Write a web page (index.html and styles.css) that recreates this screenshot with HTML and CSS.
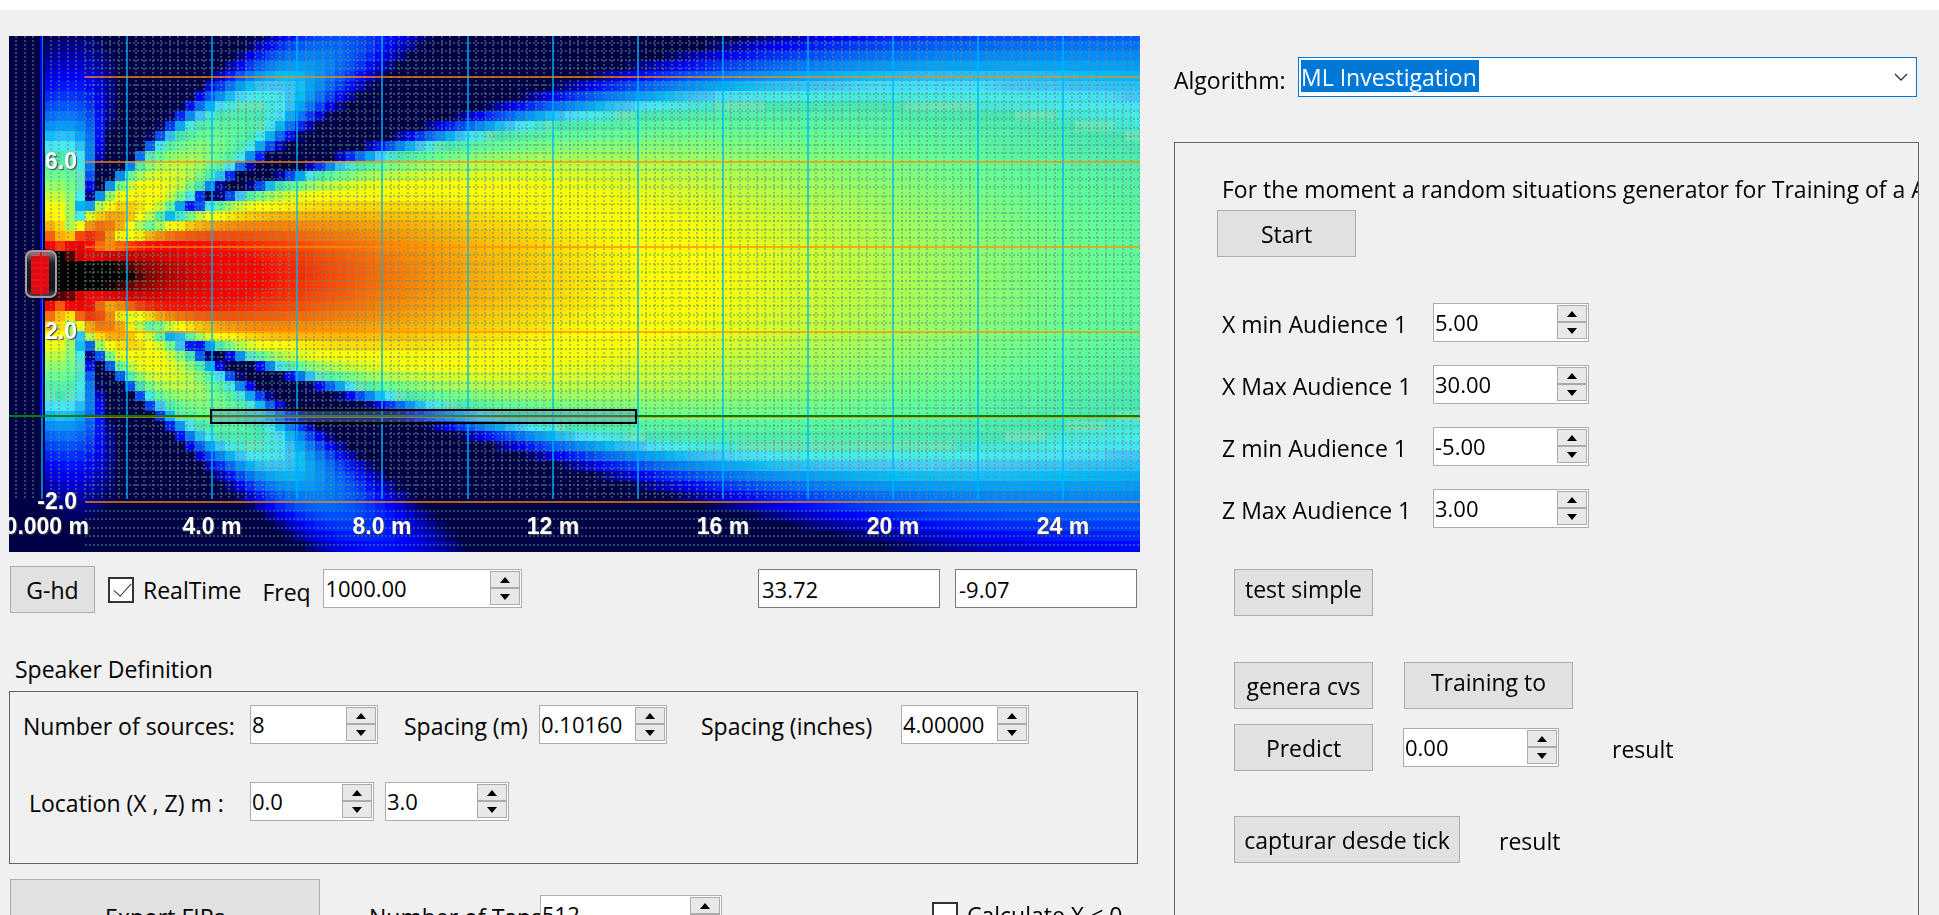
FILE: index.html
```html
<!DOCTYPE html>
<html lang="en">
<head>
  <meta charset="utf-8">
  <title>Speaker array</title>
  <link rel="stylesheet" href="styles.css">
</head>
<body>
  <main class="window">
    <section class="left">
      <div class="plot">
        <canvas id="field" width="1131" height="516"></canvas>
        <svg id="overlay" class="overlay" viewBox="0 0 1131 516">
          <defs>
            <linearGradient id="case" x1="0" y1="0" x2="0" y2="1">
              <stop offset="0" stop-color="#8a8a90"/>
              <stop offset="0.25" stop-color="#202028"/>
              <stop offset="0.8" stop-color="#141420"/>
              <stop offset="1" stop-color="#4a4a50"/>
            </linearGradient>
          </defs>
          <g id="grid" shape-rendering="crispEdges"></g>
          <g id="speaker">
            <rect x="15" y="213" width="34" height="50" rx="8" fill="#000" opacity="0.4"/>
            <rect x="17" y="215" width="30" height="46" rx="6" fill="url(#case)" stroke="#a0a0a4" stroke-width="2"/>
            <rect x="22" y="220" width="18" height="38" fill="#d01018"/>
            <rect x="22" y="216" width="18" height="4" fill="#a06068"/>
            <path d="M22 227h18M22 232h18M22 238h18M22 244h18M22 250h18M32 216v44" stroke="#ff0a14" stroke-width="2"/>
          </g>
          <g id="labels" class="labels"></g>
        </svg>
      </div>

      <div class="toolbar">
        <button class="btn small">G-hd</button>
        <label class="check"><input type="checkbox" checked><span>RealTime</span></label>
        <label for="freq">Freq</label>
        <div class="spin w200"><input id="freq" type="text" value="1000.00"><span class="arrows"><button class="up" aria-label="up"></button><button class="down" aria-label="down"></button></span></div>
        <input class="box first" type="text" value="33.72" aria-label="X">
        <input class="box" type="text" value="-9.07" aria-label="Z">
      </div>

      <h2>Speaker Definition</h2>
      <div class="group">
        <div class="row">
          <label class="l1" for="sources">Number of sources:</label>
          <div class="spin w128"><input id="sources" type="text" value="8"><span class="arrows"><button class="up" aria-label="up"></button><button class="down" aria-label="down"></button></span></div>
          <label class="l2" for="spm">Spacing (m)</label>
          <div class="spin w128"><input id="spm" type="text" value="0.10160"><span class="arrows"><button class="up" aria-label="up"></button><button class="down" aria-label="down"></button></span></div>
          <label class="l3" for="spi">Spacing (inches)</label>
          <div class="spin w128"><input id="spi" type="text" value="4.00000"><span class="arrows"><button class="up" aria-label="up"></button><button class="down" aria-label="down"></button></span></div>
        </div>
        <div class="row">
          <label class="l1 loc" for="locx">Location (X , Z) m :</label>
          <div class="spin w124"><input id="locx" type="text" value="0.0"><span class="arrows"><button class="up" aria-label="up"></button><button class="down" aria-label="down"></button></span></div>
          <div class="spin w124 next"><input id="locz" type="text" value="3.0" aria-label="Z"><span class="arrows"><button class="up" aria-label="up"></button><button class="down" aria-label="down"></button></span></div>
        </div>
      </div>

      <div class="export">
        <button class="btn big">Export FIRs</button>
        <label class="taps" for="taps">Number of Taps</label>
        <div class="spin w182"><input id="taps" type="text" value="512"><span class="arrows"><button class="up" aria-label="up"></button><button class="down" aria-label="down"></button></span></div>
        <label class="check calc"><input type="checkbox"><span>Calculate X &lt; 0</span></label>
      </div>
    </section>

    <section class="right">
      <div class="algorithm">
        <label for="algo">Algorithm:</label>
        <div class="combo">
          <select id="algo"><option>ML Investigation</option></select>
          <svg width="14" height="9" viewBox="0 0 14 9"><path d="M1 1l6 6 6-6" fill="none" stroke="#333" stroke-width="1.4"/></svg>
        </div>
      </div>

      <div class="panel">
        <p>For the moment a random situations generator for Training of a AI</p>
        <button class="btn start">Start</button>

        <div class="limits">
          <label for="xmin">X min Audience 1</label>
          <div class="spin"><input id="xmin" type="text" value="5.00"><span class="arrows"><button class="up" aria-label="up"></button><button class="down" aria-label="down"></button></span></div>
          <label for="xmax">X Max Audience 1</label>
          <div class="spin"><input id="xmax" type="text" value="30.00"><span class="arrows"><button class="up" aria-label="up"></button><button class="down" aria-label="down"></button></span></div>
          <label for="zmin">Z min Audience 1</label>
          <div class="spin"><input id="zmin" type="text" value="-5.00"><span class="arrows"><button class="up" aria-label="up"></button><button class="down" aria-label="down"></button></span></div>
          <label for="zmax">Z Max Audience 1</label>
          <div class="spin"><input id="zmax" type="text" value="3.00"><span class="arrows"><button class="up" aria-label="up"></button><button class="down" aria-label="down"></button></span></div>
        </div>

        <div class="actions">
          <div class="line test"><button class="btn high">test simple</button></div>
          <div class="line"><button class="btn">genera cvs</button><button class="btn high wide">Training to</button></div>
          <div class="line predict">
            <button class="btn">Predict</button>
            <div class="spin"><input type="text" value="0.00" aria-label="Prediction"><span class="arrows"><button class="up" aria-label="up"></button><button class="down" aria-label="down"></button></span></div>
            <output>result</output>
          </div>
          <div class="line capture"><button class="btn xwide">capturar desde tick</button><output>result</output></div>
        </div>
      </div>
    </section>
  </main>
  <script src="plot.js"></script>
</body>
</html>
```
FILE: styles.css
```css
* {
  box-sizing: border-box;
}

body {
  margin: 0;
  height: 100vh;
  overflow: hidden;
  background: #f0f0f0;
  border-top: 10px solid #fff;
  font: 23px/32px "Open Sans", "Noto Sans", sans-serif;
  color: #000;
}

button, input, select {
  font: inherit;
  color: inherit;
  border-radius: 0;
  margin: 0;
}

.window {
  display: grid;
  grid-template-columns: 1131fr 745fr;
  gap: 34px;
  padding: 0 20px 0 9px;
}

.left {
  padding-top: 26px;
  min-width: 0;
}

/* sound field */
.plot {
  display: grid;
  overflow: hidden;
}

.plot canvas, .overlay {
  grid-area: 1 / 1;
  display: block;
  width: 100%;
}

.labels {
  font: bold 23px "Liberation Sans", Arial, sans-serif;
  fill: #fff;
  text-shadow: 1px 1px 1px #444;
}

/* controls */
.btn {
  width: 139px;
  height: 47px;
  padding: 0;
  background: #e1e1e1;
  border: 1px solid #adadad;
  white-space: nowrap;
}

.btn.small { width: 85px; }
.btn.wide { width: 169px; }
.btn.xwide { width: 226px; }
.btn.high { padding: 0 0 8px; }
.btn.big { width: 310px; height: 76px; }

.spin {
  display: flex;
  width: 156px;
  height: 39px;
  padding: 1px;
  background: #fff;
  border: 1px solid #abadb3;
}

.spin.w124 { width: 124px; }
.spin.w128 { width: 128px; }
.spin.w182 { width: 182px; }
.spin.w200 { width: 199px; }

.spin input {
  flex: 1;
  min-width: 0;
  padding: 0 0 2px;
  border: 0;
  outline: 0;
  font-size: 22px;
}

.arrows {
  display: flex;
  flex-direction: column;
  width: 30px;
}

.arrows button {
  display: flex;
  align-items: center;
  justify-content: center;
  height: 17px;
  padding: 0;
  background: #e8e8e8;
  border: 1px solid #ababab;
}

.arrows button::before {
  content: "";
  border: 5px solid transparent;
}

.arrows .up::before {
  border-top-width: 0;
  border-bottom: 6px solid #000;
}

.arrows .down::before {
  border-bottom-width: 0;
  border-top: 6px solid #000;
}

.check {
  display: flex;
  align-items: center;
  gap: 9px;
}

.check input {
  appearance: none;
  width: 26px;
  height: 26px;
  border: 2px solid #333;
  background: #fff;
}

.check input:checked::before {
  content: "";
  display: block;
  width: 8px;
  height: 16px;
  margin: 0 0 0 8px;
  border: solid #333;
  border-width: 0 1px 1px 0;
  transform: rotate(42deg);
}

.box {
  width: 182px;
  height: 39px;
  padding: 0 3px;
  border: 1px solid #7a7a7a;
  font-size: 22px;
}

.toolbar {
  display: flex;
  align-items: center;
  padding: 14px 3px 0 1px;
}

.toolbar .check {
  margin: 1px 21px 0 13px;
}

.toolbar > label[for] {
  width: 61px;
  padding-top: 4px;
}

.toolbar .spin, .toolbar .box {
  margin-bottom: 2px;
}

.toolbar .box {
  margin-left: 15px;
}

.toolbar .box.first {
  margin-left: auto;
}

h2 {
  margin: 40px 0 6px 6px;
  font-size: 23px;
  font-weight: normal;
}

.group {
  height: 173px;
  margin-right: 2px;
  padding: 13px 0 0 13px;
  border: 1px solid #646464;
}

.row {
  display: flex;
  margin-bottom: 38px;
}

.row label {
  padding-top: 5px;
  white-space: nowrap;
}

.l1 { width: 227px; }
.l1.loc { padding-left: 6px; }
.l2 { width: 161px; padding-left: 26px; }
.l3 { width: 234px; padding-left: 34px; }
.next { margin-left: 11px; }

.export {
  display: flex;
  padding: 15px 0 0 1px;
}

.taps {
  width: 171px;
  margin: 22px 0 0 49px;
  overflow: hidden;
  white-space: nowrap;
}

.export .spin {
  margin-top: 16px;
}

.calc {
  height: 32px;
  margin: 20px 7px 0 auto;
}

.calc span {
  min-width: 166px;
}

/* right side */
.right {
  padding-top: 47px;
  min-width: 0;
}

.algorithm {
  display: flex;
  margin-right: 2px;
}

.algorithm label {
  width: 124px;
  padding-top: 7px;
}

.combo {
  position: relative;
  flex: 1;
}

.combo select {
  appearance: none;
  width: 100%;
  height: 40px;
  padding: 0 2px;
  color: #fff;
  border: 1px solid #0078d7;
  background: linear-gradient(#0078d7, #0078d7) 2px 2px / 178px 32px no-repeat #fff;
}

.combo svg {
  position: absolute;
  right: 9px;
  top: 16px;
}

.panel {
  height: 820px;
  margin-top: 45px;
  padding: 30px 0 0 42px;
  border: 1px solid #646464;
  overflow: hidden;
}

.panel p {
  margin: 0 0 5px 5px;
  white-space: nowrap;
}

.start {
  display: block;
}

.limits {
  display: grid;
  grid-template-columns: 211px 156px;
  row-gap: 23px;
  margin: 46px 0 0 5px;
}

.limits label {
  padding-top: 5px;
}

.actions {
  margin: 41px 0 0 17px;
}

.line {
  display: flex;
  gap: 31px;
  margin-bottom: 15px;
}

.line.test { margin-bottom: 46px; }
.line.predict { gap: 30px; margin-bottom: 45px; }
.line .spin { margin-top: 4px; }
.line output { padding-top: 9px; }
.predict output { margin-left: 23px; }
.capture output { margin-left: 8px; }
```
FILE: plot.js
```js
// Sound field of a vertical line array, drawn cell by cell
const SCALE = 42.55;   // pixels per metre
const X0 = 33;         // x = 0 m
const Z0 = 381;        // z = 0 m
const CELL = 10;
const FREQ = 1000;
const SOURCES = 8;
const SPACING = 0.1016;

// level in dB -> colour
const palette = [
  [-36, 0, 0, 70],
  [-33.9, 0, 0, 255],
  [-31.2, 0, 170, 255],
  [-31.0, 0, 190, 255],
  [-30.9, 30, 190, 255],
  [-30.5, 70, 200, 255],
  [-30.45, 70, 220, 255],
  [-30.1, 70, 235, 235],
  [-29.7, 70, 230, 210],
  [-29.69, 100, 230, 190],
  [-29.52, 100, 230, 180],
  [-29.51, 70, 230, 180],
  [-28, 100, 255, 150],
  [-24, 255, 255, 0],
  [-23.1, 255, 255, 0],
  [-14.2, 255, 0, 0],
  [-13.3, 255, 0, 0],
  [-10.5, 200, 0, 0],
  [-8, 120, 0, 0],
  [-6.2, 0, 0, 0]
];

function colour(db) {
  if (db <= palette[0][0]) return 'rgb(0,0,70)';
  for (let i = 1; i < palette.length; i++) {
    const a = palette[i - 1], b = palette[i];
    if (db < b[0]) {
      const t = (db - a[0]) / (b[0] - a[0]);
      const c = [1, 2, 3].map(k => Math.round(a[k] + (b[k] - a[k]) * t));
      return `rgb(${c.join(',')})`;
    }
  }
  return '#000';
}

function level(x, z) {
  const k = 2 * Math.PI * FREQ / 343;
  let re = 0, im = 0;
  for (let i = 0; i < SOURCES; i++) {
    const r = Math.hypot(x, z - 3 - i * SPACING);
    // each box radiates about 4 dB less to the side
    const a = Math.pow((1 + x / r) / 2, 0.7) / r;
    re += a * Math.cos(k * r);
    im += a * Math.sin(k * r);
  }
  return 20 * Math.log10(Math.hypot(re, im) / SOURCES);
}

const ctx = document.getElementById('field').getContext('2d');
ctx.fillStyle = 'rgb(0,0,70)';
ctx.fillRect(0, 0, 1131, 516);
for (let px = 36; px < 1131; px += CELL) {
  for (let py = -5; py < 516; py += CELL) {
    ctx.fillStyle = colour(level((px + 5 - X0) / SCALE, (Z0 - py - 4) / SCALE));
    ctx.fillRect(px, py, CELL, CELL);
  }
}

// grid and axes
const NS = 'http://www.w3.org/2000/svg';
const grid = document.getElementById('grid');
const labels = document.getElementById('labels');

function line(x1, y1, x2, y2, stroke, dash) {
  const el = document.createElementNS(NS, 'path');
  el.setAttribute('d', `M${x1} ${y1}L${x2} ${y2}`);
  el.setAttribute('stroke', stroke);
  el.setAttribute('stroke-width', 2);
  if (dash) el.setAttribute('stroke-dasharray', '2 2');
  grid.appendChild(el);
}

function text(x, y, str, anchor) {
  const el = document.createElementNS(NS, 'text');
  el.setAttribute('x', x);
  el.setAttribute('y', y);
  el.setAttribute('text-anchor', anchor);
  el.textContent = str;
  labels.appendChild(el);
}

for (let i = -3; i <= 129; i++) {
  const x = Math.round(X0 + i * SCALE / 5);
  if (i % 10) line(x, 0, x, 463, 'rgba(128,128,140,.5)', true);
  else line(x, 0, x, 463, 'rgba(0,180,255,.7)');
}
for (let i = -15; i <= 44; i++) {
  const y = Math.round(Z0 - i * SCALE / 5);
  if (i % 10) line(76, y, 1131, y, 'rgba(60,160,120,.5)', true);
  else line(76, y, 1131, y, 'rgba(255,140,0,.7)');
}
line(32, 0, 32, 381, '#0000ff');
line(0, 380, 1131, 380, '#008000');

// audience area
const area = document.createElementNS(NS, 'rect');
area.setAttribute('x', 202);
area.setAttribute('y', 374);
area.setAttribute('width', 425);
area.setAttribute('height', 13);
area.setAttribute('fill', 'rgba(100,130,190,.4)');
area.setAttribute('stroke', '#000');
area.setAttribute('stroke-width', 2);
grid.appendChild(area);

text(80, 498, '0.000 m', 'end');
['4.0 m', '8.0 m', '12 m', '16 m', '20 m', '24 m'].forEach((s, i) => {
  text(Math.round(X0 + (i + 1) * 4 * SCALE), 498, s, 'middle');
});
[['6.0', 133], ['2.0', 303], ['-2.0', 473]].forEach(([s, y]) => text(68, y, s, 'end'));
```
